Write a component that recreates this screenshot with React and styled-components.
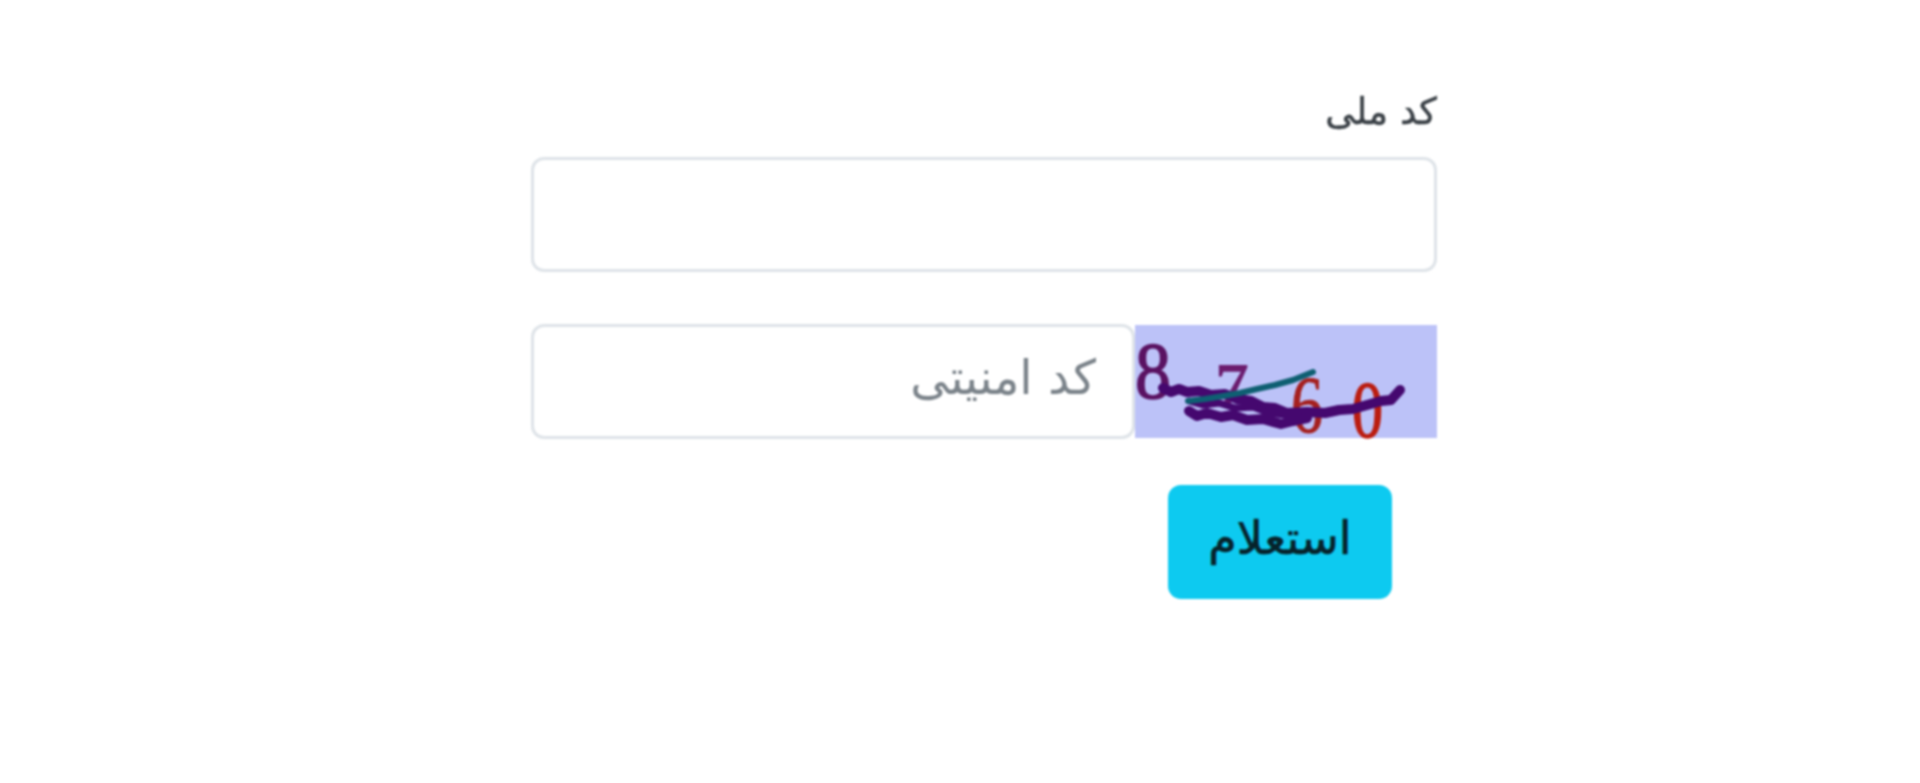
import React from 'react';
import styled, { createGlobalStyle } from 'styled-components';

const GlobalStyle = createGlobalStyle`
  html, body {
    margin: 0;
    padding: 0;
    background: #fff;
  }
`;

const Page = styled.div`
  box-sizing: border-box;
  height: 783px;
  overflow: hidden;
  padding: 90px 483px 0 531px;
  direction: rtl;
  font-family: "DejaVu Sans", sans-serif;
  filter: blur(0.9px);
`;

const Form = styled.form`
  display: flex;
  flex-direction: column;
`;

const Field = styled.div`
  display: flex;
  flex-direction: column;
  margin-bottom: 52px;
`;

const Label = styled.label`
  height: 67px;
  margin-top: -1px;
  margin-bottom: 1px;
  font-size: 37px;
  line-height: 46px;
  color: #3a4046;
  -webkit-text-stroke: 0.5px #3a4046;
`;

const Input = styled.input`
  box-sizing: border-box;
  flex: ${(props) => (props.$grow ? '1' : 'none')};
  width: ${(props) => (props.$grow ? '0' : '100%')};
  height: 115px;
  padding: 0 36px 10px;
  border: 3px solid #dee3e8;
  border-radius: 13px;
  background: #fff;
  font-family: inherit;
  font-size: 48px;
  color: #212529;
  direction: rtl;
  outline: none;

  &::placeholder {
    color: #7b838a;
    opacity: 1;
  }
`;

const CaptchaRow = styled.div`
  display: flex;
  align-items: center;
  margin-bottom: 46px;
`;

const Captcha = styled.svg`
  display: block;
  flex: none;
  width: 302px;
  height: 113px;
  overflow: visible;
  background: #bcc2f8;
`;

const SubmitButton = styled.button`
  align-self: flex-start;
  box-sizing: border-box;
  width: 224px;
  height: 114px;
  margin-right: 45px;
  padding: 0 0 8px;
  border: none;
  border-radius: 13px;
  background: #0dcaf0;
  font-family: inherit;
  font-size: 46px;
  color: #06232b;
  -webkit-text-stroke: 0.7px #06232b;
`;

const CaptchaImage = () => (
  <Captcha viewBox="0 0 302 113" aria-label="captcha">
    <g fontFamily="'Liberation Serif', serif" direction="ltr">
      <text x="0" y="73" fontSize="80" fill="#5a1262" stroke="#5a1262" strokeWidth="1.5" textLength="36" lengthAdjust="spacingAndGlyphs">8</text>
      <text x="80" y="80" fontSize="62" fontWeight="700" fill="#6b1c6e" textLength="34" lengthAdjust="spacingAndGlyphs">7</text>
      <text x="156" y="107" fontSize="80" fill="#a5201f" stroke="#a5201f" strokeWidth="1" textLength="32" lengthAdjust="spacingAndGlyphs">6</text>
      <text x="217" y="112" fontSize="80" fill="#bb1d10" stroke="#bb1d10" strokeWidth="1.5" textLength="31" lengthAdjust="spacingAndGlyphs">0</text>
    </g>
    <g fill="none" strokeLinecap="round" strokeLinejoin="round">
      <path d="M28 63 L36 67 L44 64 L52 67 L64 66 L76 70 L90 69 L102 74 L116 76 L128 82 L140 83 L152 88 L172 87 L190 88 L204 85 L218 84 L232 80 L246 76 L256 75 L265 65" stroke="#45086f" strokeWidth="10" />
      <path d="M54 76 L68 80 L84 78 L100 83 L118 82 L134 88 L150 90" stroke="#45086f" strokeWidth="7" />
      <path d="M54 86 L62 91 L72 88 L86 92 L98 90 L112 95 L128 94 L146 99 L158 96 L172 93" stroke="#45086f" strokeWidth="10" />
      <path d="M53 76 L70 74 L88 71 L105 68 L122 64 L140 60 L158 55 L178 47" stroke="#0f5f72" strokeWidth="6" />
    </g>
  </Captcha>
);

const App = () => {
  return (
    <>
      <GlobalStyle />
      <Page>
        <Form onSubmit={(e) => e.preventDefault()}>
          <Field>
            <Label htmlFor="national-code">کد ملی</Label>
            <Input id="national-code" type="text" />
          </Field>
          <CaptchaRow>
            <CaptchaImage />
            <Input $grow type="text" placeholder="کد امنیتی" />
          </CaptchaRow>
          <SubmitButton type="submit">استعلام</SubmitButton>
        </Form>
      </Page>
    </>
  );
};

export default App;
